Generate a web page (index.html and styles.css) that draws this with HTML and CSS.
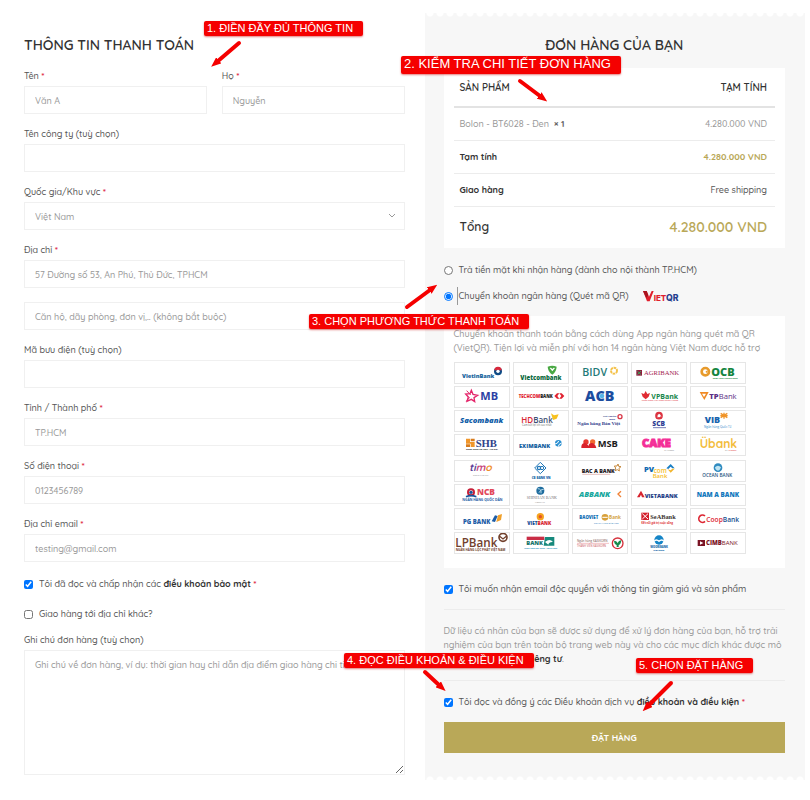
FILE: index.html
```html
<!DOCTYPE html>
<html lang="vi">

<head>
    <meta charset="UTF-8">
    <meta name="viewport" content="width=device-width, initial-scale=1.0">
    <title>Thông tin thanh toán</title>
    <link rel="stylesheet" href="styles.css">
</head>

<body>
    <form class="checkout">
        <section class="billing">
            <h2>THÔNG TIN THANH TOÁN</h2>
            <div class="name-row">
                <div class="field">
                    <label for="first_name">Tên <span class="required">*</span></label>
                    <input type="text" id="first_name" placeholder="Văn A">
                </div>
                <div class="field">
                    <label for="last_name">Họ <span class="required">*</span></label>
                    <input type="text" id="last_name" placeholder="Nguyễn">
                </div>
            </div>
            <div class="field">
                <label for="company">Tên công ty (tuỳ chọn)</label>
                <input type="text" id="company">
            </div>
            <div class="field">
                <label for="country">Quốc gia/Khu vực <span class="required">*</span></label>
                <div class="select-box">
                    <select id="country">
                        <option>Việt Nam</option>
                    </select>
                    <svg class="chevron" viewBox="0 0 8 6"><path d="M1 1l3 3 3-3" /></svg>
                </div>
            </div>
            <div class="field">
                <label for="address" id="address_label">Địa chỉ <span class="required">*</span></label>
                <input type="text" id="address" placeholder="57 Đường số 53, An Phú, Thủ Đức, TPHCM">
                <input type="text" class="second-line" aria-labelledby="address_label" placeholder="Căn hộ, dãy phòng, đơn vị,.. (không bắt buộc)">
            </div>
            <div class="field">
                <label for="postcode">Mã bưu điện (tuỳ chọn)</label>
                <input type="text" id="postcode">
            </div>
            <div class="field">
                <label for="city">Tỉnh / Thành phố <span class="required">*</span></label>
                <input type="text" id="city" placeholder="TP.HCM">
            </div>
            <div class="field">
                <label for="phone">Số điện thoại <span class="required">*</span></label>
                <input type="tel" id="phone" placeholder="0123456789">
            </div>
            <div class="field">
                <label for="email">Địa chỉ email <span class="required">*</span></label>
                <input type="email" id="email" placeholder="testing@gmail.com">
            </div>
            <label class="check accept"><input type="checkbox" checked><span>Tôi đã đọc và chấp nhận các <b>điều khoản bảo mật</b> <span class="required">*</span></span></label>
            <label class="check ship-to"><input type="checkbox"><span>Giao hàng tới địa chỉ khác?</span></label>
            <div class="field">
                <label for="note">Ghi chú đơn hàng (tuỳ chọn)</label>
                <textarea id="note" placeholder="Ghi chú về đơn hàng, ví dụ: thời gian hay chỉ dẫn địa điểm giao hàng chi tiết hơn."></textarea>
            </div>
        </section>

        <section class="order">
            <h2>ĐƠN HÀNG CỦA BẠN</h2>
            <div class="card">
                <table>
                    <thead>
                        <tr><th>SẢN PHẨM</th><th>TẠM TÍNH</th></tr>
                    </thead>
                    <tbody>
                        <tr class="item"><td>Bolon - BT6028 - Đen &nbsp;<b>× 1</b></td><td>4.280.000 VND</td></tr>
                        <tr class="subtotal"><th>Tạm tính</th><td>4.280.000 VND</td></tr>
                        <tr class="shipping"><th>Giao hàng</th><td>Free shipping</td></tr>
                        <tr class="total"><th>Tổng</th><td>4.280.000 VND</td></tr>
                    </tbody>
                </table>
            </div>

            <div class="payment">
                <label class="check"><input type="radio" name="pay"><span>Trả tiền mặt khi nhận hàng (dành cho nội thành TP.HCM)</span></label>
                <label class="check"><input type="radio" name="pay" checked><span class="focused">Chuyển khoản ngân hàng (Quét mã QR)</span>
                    <svg class="vietqr" viewBox="0 0 111 36">
                        <path d="M0 3h11l7 17 8-17h6L20 34h-8z" fill="#e01f2d" /><path d="M0 3h11l5 13-6 8z" fill="#a8141f" />
                        <text x="32" y="33" font-size="24" fill="#e01f2d" class="heavy">IET</text>
                        <text x="69" y="33" font-size="26" fill="#26408f" class="heavy">QR</text>
                    </svg>
                </label>
            </div>

            <div class="card bank-card">
                <p>Chuyển khoản thanh toán bằng cách dùng App ngân hàng quét mã QR (VietQR). Tiện lợi và miễn phí với hơn 14 ngân hàng Việt Nam được hỗ trợ</p>
                <div class="banks">
                    <svg viewBox="3 3 162 60">
                        <text x="24" y="47" font-size="17" fill="#17639d" class="heavy">VietinBank</text>
                        <circle cx="132" cy="28" r="12" fill="#0f4c86" /><path d="M121 25a11 11 0 0 1 22 0z" fill="#d9283b" /><circle cx="132" cy="28" r="5" fill="#fff" />
                    </svg>
                    <svg viewBox="3 3 162 60">
                        <text x="22" y="53" font-size="18" fill="#0c6a40" class="heavy">Vietcombank</text>
                        <path d="M104 14q14-6 27 0-1 16-13 24-13-8-14-24z" fill="#48a842" /><path d="M110 18l8 10 8-10-4-1-4 4-4-4z" fill="#fff" />
                    </svg>
                    <svg viewBox="3 3 162 60">
                        <text x="31" y="43" font-size="32" fill="#1f7a78" class="semi">BIDV</text>
                        <circle cx="126" cy="26" r="9" fill="none" stroke="#f4c24a" stroke-width="6" stroke-dasharray="8 2" />
                    </svg>
                    <svg viewBox="3 3 162 60">
                        <path d="M16 24h17v17H16z" fill="#8f1d3f" /><path d="M19 27l11 11M30 27L19 38" stroke="#41a05a" stroke-width="3" />
                        <text x="39" y="40" font-size="20" fill="#a32450" class="serif">AGRIBANK</text>
                    </svg>
                    <svg viewBox="3 3 162 60">
                        <circle cx="46" cy="29" r="11" fill="#fff" stroke="#e79a2b" stroke-width="8" /><circle cx="50" cy="29" r="3" fill="#e79a2b" />
                        <text x="64" y="41" font-size="33" fill="#14853f" class="heavy">OCB</text>
                        <text x="68" y="50" font-size="6" fill="#14853f" class="bold">Ngân Hàng Phương Đông</text>
                    </svg>
                    <svg viewBox="3 3 162 60">
                        <path d="M52 13l5 12 14 3-11 7 2 12-10-7-13 6 4-13-8-9 13-1z" fill="none" stroke="#e4256a" stroke-width="4" /><path d="M38 14l12 13M37 46l10-12" stroke="#e4256a" stroke-width="3" />
                        <text x="79" y="42" font-size="33" fill="#2b3fa3" class="bold">MB</text>
                    </svg>
                    <svg viewBox="3 3 162 60">
                        <text x="17" y="35" font-size="13" fill="#e02331" class="heavy">TECHCOM<tspan fill="#222">BANK</tspan></text>
                        <path d="M124 30l8-8h7l-6 8 6 8h-7zM154 30l-8-8h-7l6 8-6 8h7z" fill="#e02331" />
                    </svg>
                    <svg viewBox="3 3 162 60">
                        <text x="39" y="45" font-size="43" fill="#1c4d9f" class="heavy">ACB</text>
                        <circle cx="90" cy="30" r="7" fill="#58b5e8" />
                    </svg>
                    <svg viewBox="3 3 162 60">
                        <path d="M44 15l5 9 8-3-4 11-9 8-9-8-4-11 8 3z" fill="#e02b33" />
                        <text x="61" y="38" font-size="21" fill="#16874b" class="bold">VPBank</text>
                        <text x="32" y="46" font-size="7" fill="#e02b33">Ngân hàng Việt Nam Thịnh Vượng</text>
                    </svg>
                    <svg viewBox="3 3 162 60">
                        <path d="M29 18h27l-13 24z" fill="#f08a24" /><path d="M36 23h12l-6 10z" fill="#fff" />
                        <text x="58" y="38" font-size="23" fill="#5b2f86"><tspan class="heavy">TP</tspan>Bank</text>
                    </svg>
                    <svg viewBox="3 3 162 60">
                        <text x="18" y="40" font-size="23" fill="#1260a8" class="heavy italic">Sacombank</text>
                    </svg>
                    <svg viewBox="3 3 162 60">
                        <text x="25" y="38" font-size="24" fill="#d92633" class="semi">HD<tspan fill="#3d5074">Bank</tspan></text>
                        <path d="M114 10l9 6 14-3-6 13-11 4z" fill="#f7c11f" />
                        <text x="27" y="49" font-size="8" fill="#666">Cam kết lợi ích cao nhất</text>
                    </svg>
                    <svg viewBox="3 3 162 60">
                        <text x="16" y="46" font-size="15" fill="#32418d" class="serif bold">Ngân hàng Bản Việt</text>
                        <text x="93" y="22" font-size="7" fill="#32418d" class="bold">Viet Capital</text><text x="112" y="31" font-size="7" fill="#32418d" class="bold">Bank</text>
                        <circle cx="144" cy="20" r="6" fill="none" stroke="#d93a4a" stroke-width="4" />
                    </svg>
                    <svg viewBox="3 3 162 60">
                        <circle cx="84" cy="17" r="8" fill="none" stroke="#dc3340" stroke-width="7" /><path d="M80 22l5-10 5 8" stroke="#fff" stroke-width="2" fill="none" />
                        <text x="64" y="49" font-size="20" fill="#303f94" class="heavy">SCB</text><path d="M66 53h39" stroke="#303f94" stroke-width="2" />
                    </svg>
                    <svg viewBox="3 3 162 60">
                        <text x="44" y="39" font-size="27" fill="#1863ae" class="heavy">VIB</text>
                        <path d="M102 26V8M92 10l20 13M112 10L92 23M91 17h22" stroke="#f09428" stroke-width="4" />
                        <text x="42" y="53" font-size="9" fill="#2c87c9">Ngân hàng Quốc Tế</text>
                    </svg>
                    <svg viewBox="3 3 162 60">
                        <path d="M36 14h12v10h14v15H50V29H36z" fill="#f0962b" /><path d="M50 14h12v8H50zM36 31h12v8H36z" fill="#d87c1d" />
                        <text x="65" y="38" font-size="32" fill="#2e4289" class="serif bold">SHB</text>
                        <text x="36" y="48" font-size="7" fill="#222" class="bold">Ngân hàng Sài Gòn - Hà Nội</text>
                    </svg>
                    <svg viewBox="3 3 162 60">
                        <text x="18" y="43" font-size="17" fill="#15619f" class="heavy">EXIMBANK</text>
                        <circle cx="136" cy="28" r="10" fill="#2b8fd0" /><path d="M126 30q9-1 11-9M136 38q0-8 10-11" stroke="#fff" stroke-width="3" fill="none" />
                    </svg>
                    <svg viewBox="3 3 162 60">
                        <circle cx="42" cy="24" r="8" fill="#e8392f" /><circle cx="62" cy="24" r="8" fill="#f26a30" /><path d="M28 42q-1-14 9-15 8 0 17 15zM52 42q-6-12 5-15 12-1 16 15z" fill="#d9222b" />
                        <text x="77" y="40" font-size="28" fill="#1c1c1c" class="bold">MSB</text>
                    </svg>
                    <svg viewBox="3 3 162 60">
                        <text x="33" y="40" font-size="33" fill="#f42e97" stroke="#f42e97" stroke-width="3" class="heavy">CAKE</text>
                        <text x="100" y="52" font-size="6" fill="#888">by VPBank</text>
                    </svg>
                    <svg viewBox="3 3 162 60">
                        <text x="29" y="42" font-size="36" fill="#f3bc3b" class="round">Übank</text>
                        <text x="105" y="52" font-size="7" fill="#888">by <tspan fill="#d33">VPBank</tspan></text>
                    </svg>
                </div>
                <div class="banks">
                    <svg viewBox="3 3 162 60">
                        <text x="45" y="34" font-size="31" fill="#5b3d96" class="round bold italic">ti<tspan fill="#c6457c">m</tspan><tspan fill="#f08d2c">o</tspan></text>
                        <text x="57" y="48" font-size="7" fill="#888">DIGITAL BANK</text>
                    </svg>
                    <svg viewBox="3 3 162 60">
                        <path d="M82 7l17 17-17 17-17-17z" fill="none" stroke="#2177b8" stroke-width="3" /><circle cx="78" cy="24" r="5" fill="none" stroke="#2177b8" stroke-width="4" /><circle cx="87" cy="24" r="5" fill="none" stroke="#2177b8" stroke-width="3" />
                        <text x="56" y="56" font-size="9" fill="#1867a8" class="heavy">CB BANK VN</text>
                    </svg>
                    <svg viewBox="3 3 162 60">
                        <text x="29" y="38" font-size="16" fill="#26211f" class="heavy">BAC A BANK</text><path d="M31 43h84" stroke="#d9a09c" stroke-width="2" />
                        <path d="M138 12l2 7 7 1-6 5 1 8-6-4-7 3 2-8-4-6 8 0z" fill="none" stroke="#c7893d" stroke-width="3" />
                    </svg>
                    <svg viewBox="3 3 162 60">
                        <text x="39" y="36" font-size="23" fill="#1269b2" class="heavy">PV</text>
                        <text x="68" y="38" font-size="19" fill="#f5bd2e" class="semi">com</text><text x="65" y="53" font-size="18" fill="#f5bd2e" class="semi">Bank</text>
                        <path d="M106 25l13-13 12 13h-7l-5-5-7 7z" fill="#1b7fc4" /><path d="M110 28l9 10 12-12h-7l-5 5z" fill="#f2b52d" />
                    </svg>
                    <svg viewBox="3 3 162 60">
                        <circle cx="84" cy="23" r="13" fill="#2f8bc0" /><path d="M75 22q9-10 18 0-3 9-9 10-8-1-9-10z" fill="#bfe4f2" />
                        <text x="37" y="52" font-size="14" fill="#28557f" class="semi">OCEAN BANK</text>
                    </svg>
                    <svg viewBox="3 3 162 60">
                        <circle cx="51" cy="25" r="9" fill="#fff" stroke="#c6203a" stroke-width="6" /><path d="M36 38q15-6 31 0" stroke="#17539a" stroke-width="5" fill="none" /><circle cx="51" cy="25" r="5" fill="#17539a" />
                        <text x="69" y="33" font-size="25" fill="#e2485a" class="heavy">NCB</text>
                        <text x="25" y="52" font-size="10" fill="#1c5ca5" class="bold">NGÂN HÀNG QUỐC DÂN</text>
                    </svg>
                    <svg viewBox="3 3 162 60">
                        <circle cx="82" cy="20" r="12" fill="#1e6c9e" /><path d="M74 14q12 0 10 14M78 26q6-12 14-10" stroke="#b9dcea" stroke-width="3" fill="none" />
                        <text x="41" y="45" font-size="12" fill="#777" class="serif">SHINHAN BANK</text><text x="66" y="56" font-size="7" fill="#888">VIETNAM</text>
                    </svg>
                    <svg viewBox="3 3 162 60">
                        <text x="21" y="39" font-size="23" fill="#16a79d" class="heavy italic">ABBANK</text><path d="M147 22l-9 8 9 9" stroke="#f08236" stroke-width="4" fill="none" />
                    </svg>
                    <svg viewBox="3 3 162 60">
                        <path d="M18 40l12-20 11 20h-8l-3-8-4 8z" fill="#d7232e" />
                        <text x="41" y="41" font-size="17" fill="#273f88" class="heavy">VIETABANK</text>
                    </svg>
                    <svg viewBox="3 3 162 60">
                        <text x="20" y="38" font-size="19" fill="#1278bd" class="heavy">NAM A BANK</text>
                    </svg>
                    <svg viewBox="3 3 162 60">
                        <text x="27" y="49" font-size="18" fill="#1d5ca6" class="heavy">PG BANK</text>
                        <path d="M113 40l10-18 8 2-8 18z" fill="#1d5ca6" /><path d="M127 42l5-20 12-4-3 18z" fill="#f0a02b" />
                    </svg>
                    <svg viewBox="3 3 162 60">
                        <circle cx="82" cy="26" r="11" fill="#f5a31f" /><circle cx="82" cy="26" r="5" fill="#e2522a" />
                        <text x="43" y="51" font-size="14" fill="#164b93" class="heavy">VIET<tspan fill="#d6232e">BANK</tspan></text>
                    </svg>
                    <svg viewBox="3 3 162 60">
                        <text x="22" y="34" font-size="13" fill="#1370b5" class="heavy">BAOVIET</text><circle cx="99" cy="28" r="10" fill="#d8a03a" /><path d="M91 28h16" stroke="#fff" stroke-width="3" />
                        <text x="111" y="34" font-size="14" fill="#d3a445" class="bold">Bank</text><text x="66" y="47" font-size="7" fill="#1370b5">NGÂN HÀNG BẢO VIỆT</text>
                    </svg>
                    <svg viewBox="3 3 162 60">
                        <path d="M31 14h23v22H31z" fill="#d31f2c" /><path d="M34 17l17 16M51 17L34 33" stroke="#fff" stroke-width="3" />
                        <text x="58" y="32" font-size="19" fill="#3a3330" class="serif bold">SeABank</text><text x="31" y="48" font-size="8" fill="#d33" class="bold">Kết nối giá trị cuộc sống</text>
                    </svg>
                    <svg viewBox="3 3 162 60">
                        <path d="M45 24a11 11 0 1 0 0 16" fill="none" stroke="#dd2733" stroke-width="5" />
                        <text x="49" y="41" font-size="20" fill="#dd2733" class="semi">Coop<tspan fill="#20508f">Bank</tspan></text>
                    </svg>
                    <svg viewBox="3 3 162 60">
                        <text x="4" y="44" font-size="35" fill="#71402c" class="semi">LPBank</text><circle cx="147" cy="16" r="12" fill="none" stroke="#71402c" stroke-width="5" /><path d="M136 12l11 9 11-9" fill="none" stroke="#71402c" stroke-width="4" />
                        <text x="5" y="58" font-size="9" fill="#71402c" class="bold">NGÂN HÀNG LỘC PHÁT VIỆT NAM</text>
                    </svg>
                    <svg viewBox="3 3 162 60">
                        <path d="M41 14h53v10H41z" fill="#c92d46" /><path d="M96 15h28v26H92z" fill="#16897c" /><path d="M96 30q14-12 24 0-12-1-14 8z" fill="#fff" />
                        <text x="40" y="40" font-size="17" fill="#16756b" class="heavy">BANK</text><text x="34" y="51" font-size="6" fill="#2b93bd" class="bold">Ngân hàng xây dựng - Vững vàng</text>
                    </svg>
                    <svg viewBox="3 3 162 60">
                        <text x="15" y="30" font-size="9" fill="#7a5750">Ngân hàng KASIKORN</text><path d="M15 34h96" stroke="#d9444d" stroke-width="1" /><text x="15" y="45" font-size="8" fill="#c95058">THÀNH VIÊN KASIKORN</text>
                        <circle cx="137" cy="34" r="16" fill="#fff" stroke="#d5303b" stroke-width="4" /><path d="M126 26q9 0 11 8 3-9 11-9-1 12-8 14v6h-6v-6q-7-2-8-13z" fill="#168b4c" />
                    </svg>
                    <svg viewBox="3 3 162 60">
                        <circle cx="84" cy="24" r="14" fill="#1585c7" /><path d="M69 28q7-8 15 0 8-8 15 0" fill="none" stroke="#fff" stroke-width="4" />
                        <text x="58" y="48" font-size="8" fill="#1a6ea9" class="heavy">WOORIBANK</text><text x="67" y="57" font-size="7" fill="#1a6ea9" class="heavy">VIETNAM</text>
                    </svg>
                    <svg viewBox="3 3 162 60">
                        <path d="M23 24h22v18H23z" fill="#7b1425" /><path d="M30 28l10 5-10 5z" fill="#fff" />
                        <text x="48" y="40" font-size="18" fill="#7b1425"><tspan class="heavy">CIMB</tspan>BANK</text>
                    </svg>
                </div>
            </div>

            <label class="check newsletter"><input type="checkbox" checked><span>Tôi muốn nhận email độc quyền với thông tin giảm giá và sản phẩm</span></label>
            <p class="privacy">Dữ liệu cá nhân của bạn sẽ được sử dụng để xử lý đơn hàng của bạn, hỗ trợ trải nghiệm của bạn trên toàn bộ trang web này và cho các mục đích khác được mô tả trong <a href="#">chính sách riêng tư</a>.</p>
            <label class="check terms"><input type="checkbox" checked><span>Tôi đọc và đồng ý các Điều khoản dịch vụ <b>điều khoản và điều kiện</b> <span class="required">*</span></span></label>
            <button type="submit" class="place-order">ĐẶT HÀNG</button>
        </section>

        <!-- step callouts over the form -->
        <span class="step step-1">1. ĐIỀN ĐẦY ĐỦ THÔNG TIN</span>
        <span class="step step-2">2. KIỂM TRA CHI TIẾT ĐƠN HÀNG</span>
        <span class="step step-3">3. CHỌN PHƯƠNG THỨC THANH TOÁN</span>
        <span class="step step-4">4. ĐỌC ĐIỀU KHOẢN &amp; ĐIỀU KIỆN</span>
        <span class="step step-5">5. CHỌN ĐẶT HÀNG</span>
        <svg class="arrows" viewBox="0 0 810 800">
            <defs>
                <marker id="head" markerWidth="10" markerHeight="8" refX="1" refY="4" orient="auto" markerUnits="userSpaceOnUse">
                    <path d="M0 0l10 4-10 4z" fill="#f50000" />
                </marker>
            </defs>
            <path d="M239 43l-21 18" />
            <path d="M520 81l20 15" />
            <path d="M407 307l23-17" />
            <path d="M425 672l14 13" />
            <path d="M671 683l-22 22" />
        </svg>
    </form>
</body>

</html>
```
FILE: styles.css
```css
* {
    box-sizing: border-box;
}

body {
    font-family: Quicksand, 'Open Sans', sans-serif;
    font-size: 9px;
    line-height: 14px;
    color: #555;
    background-color: #fff;
    margin: 0;
}

.checkout {
    position: relative;
    display: grid;
    grid-template-columns: 1fr 1fr;
    gap: 20px;
    align-items: start;
    padding: 13px 5px 20px 24px;
}

h2 {
    margin: 0;
    font-size: 14px;
    line-height: 20px;
    font-weight: 600;
    color: #333;
}

.billing {
    padding-top: 22px;
}

.name-row {
    display: grid;
    grid-template-columns: 1fr 1fr;
    gap: 15px;
    margin-top: 11px;
}

.field {
    display: flex;
    flex-direction: column;
    margin-bottom: 10px;
}

.field label {
    line-height: 20px;
}

.field label,
.check {
    font-weight: 500;
}

.required {
    font-weight: 700;
    color: #e0304c;
}

input[type="text"],
input[type="tel"],
input[type="email"],
select,
textarea {
    width: 100%;
    height: 28px;
    padding: 0 10px;
    border: 1px solid #f0f0f0;
    border-radius: 0;
    background-color: #fff;
    font-family: inherit;
    font-size: 9px;
    font-weight: 500;
    color: #999;
}

::placeholder {
    color: #999;
    opacity: 1;
}

.second-line {
    margin-top: 14px;
}

.select-box {
    position: relative;
}

select {
    display: block;
    appearance: none;
}

.chevron {
    position: absolute;
    right: 9px;
    top: 11px;
    width: 8px;
    height: 6px;
    fill: none;
    stroke: #999;
}

textarea {
    height: 125px;
    padding: 7px 10px;
    line-height: 14px;
    white-space: nowrap;
    overflow: hidden;
}

.check {
    display: flex;
    align-items: center;
    gap: 6px;
    height: 20px;
    margin-bottom: 10px;
}

.check input {
    width: 9px;
    height: 9px;
    margin: 0;
}

.accept {
    margin-top: 12px;
}

.ship-to {
    margin-bottom: 6px;
}

.check b,
.privacy a {
    font-weight: 700;
    color: #333;
    text-decoration: none;
}

.order {
    position: relative;
    padding: 22px 20px 27px 19px;
    background-color: #f7f7f7;
}

/* scalloped paper edges */
.order::before,
.order::after {
    content: "";
    position: absolute;
    left: 0;
    right: 0;
    height: 4px;
    background: radial-gradient(circle at 5px 0, #fff 3px, transparent 4px) 0 0 / 10px 4px repeat-x;
}

.order::before {
    top: 0;
}

.order::after {
    bottom: 0;
    transform: scaleY(-1);
}

.order h2 {
    text-align: center;
}

.card {
    margin-top: 13px;
    padding: 0 10px;
    background-color: #fff;
}

table {
    width: 100%;
    border-collapse: collapse;
}

th,
td {
    height: 33px;
    padding: 0 8px 0 6px;
    border-bottom: 1px solid #ececec;
    text-align: left;
    font-weight: 700;
    color: #333;
}

th:last-child,
td:last-child {
    text-align: right;
}

thead th {
    height: 39px;
    padding-top: 2px;
    border-bottom: 2px solid #e3e3e3;
    font-size: 10px;
    font-weight: 600;
}

.item td {
    font-weight: 500;
    color: #999;
}

.item b {
    font-weight: 700;
    color: #666;
}

.subtotal td {
    color: #b9a858;
}

.shipping td {
    font-weight: 500;
    color: #555;
}

.total th,
.total td {
    height: 42px;
    border-bottom: 0;
    font-weight: 600;
}

.total th {
    font-size: 12px;
}

.total td {
    font-size: 14px;
    color: #b9a858;
}

.payment {
    padding-top: 12px;
}

.payment .check {
    margin-bottom: 6px;
}

.focused {
    margin-left: -2px;
    padding-left: 1px;
    border-left: 1px solid #999;
    line-height: 18px;
}

.vietqr {
    width: 37px;
    height: 12px;
    margin-left: 8px;
    font-family: Inter, sans-serif;
}

.bank-card {
    margin-top: 10px;
    padding: 11px 10px 10px;
}

.bank-card p {
    margin: 0 0 7px;
    font-weight: 500;
    color: #999;
}

.banks {
    display: grid;
    grid-template-columns: repeat(5, 56px);
    gap: 2px 3px;
    margin-bottom: 4px;
    font-family: 'Open Sans', sans-serif;
}

.banks svg {
    width: 56px;
    height: 22px;
    border: 1px solid #e6e6e6;
}

.semi {
    font-weight: 600;
}

.bold {
    font-weight: 700;
}

.heavy {
    font-weight: 800;
}

.italic {
    font-style: italic;
}

.round {
    font-family: Quicksand, 'Open Sans', sans-serif;
    font-weight: 700;
}

.serif {
    font-family: 'Liberation Serif', serif;
}

.newsletter {
    margin-top: 11px;
}

.privacy {
    margin: 0 0 11px;
    padding: 14px 0;
    border-top: 1px solid #ececec;
    border-bottom: 1px solid #ececec;
    font-weight: 500;
    color: #999;
}

.place-order {
    width: 100%;
    height: 31px;
    border: none;
    background-color: #b9a858;
    font-family: inherit;
    font-size: 9px;
    font-weight: 700;
    color: #fff;
    cursor: pointer;
}

.step {
    position: absolute;
    height: 15px;
    padding: 0 10px 0 3px;
    border-radius: 2px;
    background-color: #f50000;
    box-shadow: 0 1px 2px rgba(200, 0, 0, 0.5);
    font-family: 'Liberation Sans', Arial, sans-serif;
    font-size: 11px;
    line-height: 14px;
    white-space: nowrap;
    color: #fff;
}

.step-1 {
    left: 204px;
    top: 21px;
}

.step-2 {
    left: 401px;
    top: 56px;
    height: 18px;
    font-size: 13px;
    line-height: 16px;
}

.step-3 {
    left: 309px;
    top: 314px;
}

.step-4 {
    left: 344px;
    top: 653px;
}

.step-5 {
    left: 636px;
    top: 658px;
}

.arrows {
    position: absolute;
    left: 0;
    top: 0;
    width: 810px;
    height: 800px;
    pointer-events: none;
}

.arrows > path {
    fill: none;
    stroke: #f50000;
    stroke-width: 4;
    stroke-linecap: round;
    marker-end: url(#head);
}
```
